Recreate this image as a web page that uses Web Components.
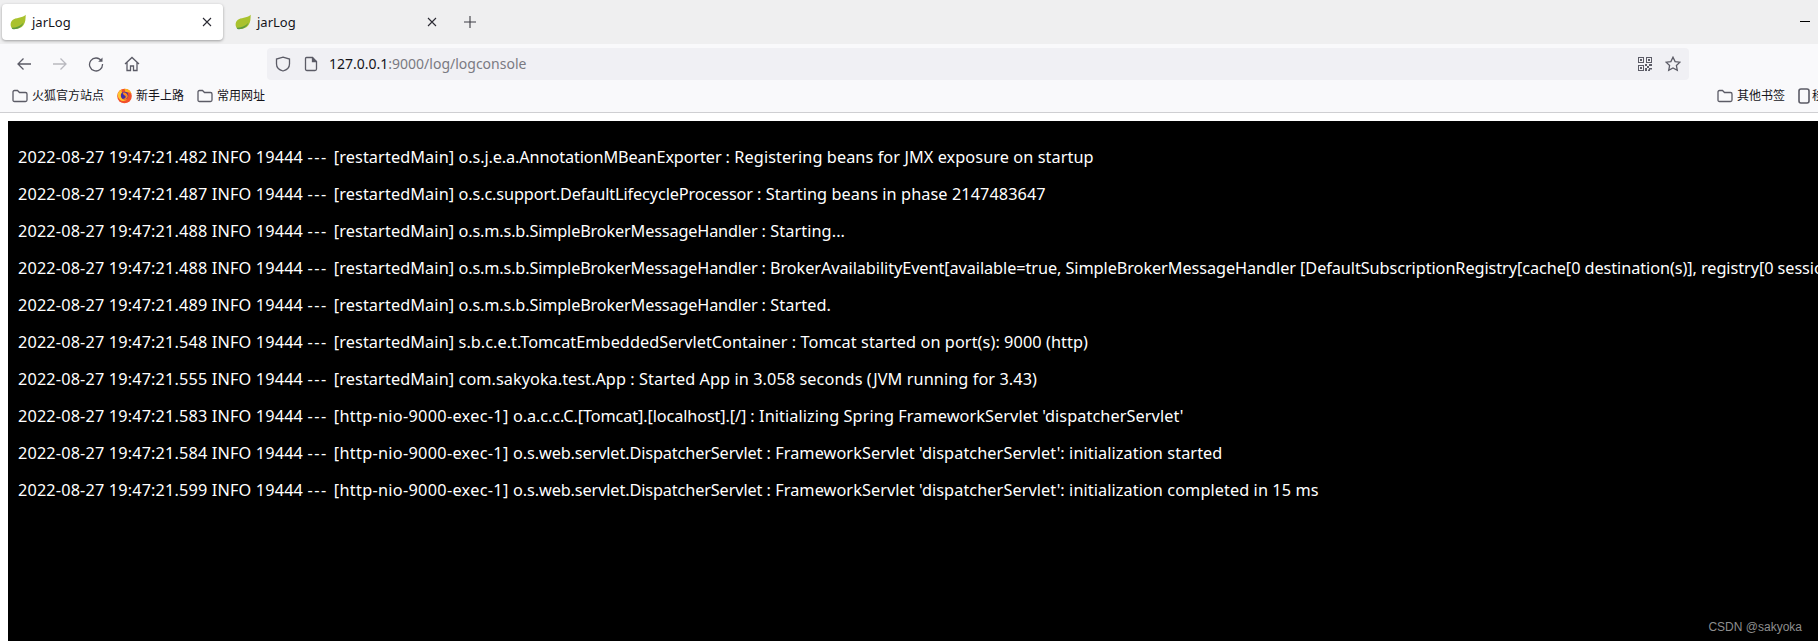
<!DOCTYPE html>
<html><head><meta charset="utf-8"><style>
html,body{margin:0;padding:0;width:1818px;height:644px;overflow:hidden;background:#fff}
</style></head><body>
<browser-window>
<tab-strip slot="tabs"></tab-strip>
<nav-bar slot="nav"></nav-bar>
<bookmark-bar slot="bookmarks"></bookmark-bar>
<log-console slot="page">
<log-line><span slot="date">2022-08-27 19:47:21.482 INFO 19444 </span><span slot="dash">--- </span><span slot="thread">[restartedMain] </span><span slot="logger">o.s.j.e.a.AnnotationMBeanExporter </span>: Registering beans for JMX exposure on startup</log-line>
<log-line><span slot="date">2022-08-27 19:47:21.487 INFO 19444 </span><span slot="dash">--- </span><span slot="thread">[restartedMain] </span><span slot="logger">o.s.c.support.DefaultLifecycleProcessor </span>: Starting beans in phase 2147483647</log-line>
<log-line><span slot="date">2022-08-27 19:47:21.488 INFO 19444 </span><span slot="dash">--- </span><span slot="thread">[restartedMain] </span><span slot="logger" class="broker">o.s.m.s.b.SimpleBrokerMessageHandler </span>: Starting...</log-line>
<log-line style="letter-spacing:-.07px"><span slot="date">2022-08-27 19:47:21.488 INFO 19444 </span><span slot="dash">--- </span><span slot="thread">[restartedMain] </span><span slot="logger" class="broker">o.s.m.s.b.SimpleBrokerMessageHandler </span>: BrokerAvailabilityEvent[available=true, SimpleBrokerMessageHandler [DefaultSubscriptionRegistry[cache[0 destination(s)], registry[0 sessions]]]]</log-line>
<log-line><span slot="date">2022-08-27 19:47:21.489 INFO 19444 </span><span slot="dash">--- </span><span slot="thread">[restartedMain] </span><span slot="logger" class="broker">o.s.m.s.b.SimpleBrokerMessageHandler </span>: Started.</log-line>
<log-line><span slot="date">2022-08-27 19:47:21.548 INFO 19444 </span><span slot="dash">--- </span><span slot="thread">[restartedMain] </span><span slot="logger" class="plain">s.b.c.e.t.TomcatEmbeddedServletContainer </span>: Tomcat started on port(s): 9000 (http)</log-line>
<log-line><span slot="date">2022-08-27 19:47:21.555 INFO 19444 </span><span slot="dash">--- </span><span slot="thread">[restartedMain] </span><span slot="logger" class="plain">com.sakyoka.test.App </span>: Started App in 3.058 seconds (JVM running for 3.43)</log-line>
<log-line><span slot="date">2022-08-27 19:47:21.583 INFO 19444 </span><span slot="dash">--- </span><span slot="thread" class="http">[http-nio-9000-exec-1] </span><span slot="logger">o.a.c.c.C.[Tomcat].[localhost].[/] </span>: Initializing Spring FrameworkServlet 'dispatcherServlet'</log-line>
<log-line><span slot="date">2022-08-27 19:47:21.584 INFO 19444 </span><span slot="dash">--- </span><span slot="thread" class="http">[http-nio-9000-exec-1] </span><span slot="logger">o.s.web.servlet.DispatcherServlet </span>: FrameworkServlet 'dispatcherServlet': initialization started</log-line>
<log-line><span slot="date">2022-08-27 19:47:21.599 INFO 19444 </span><span slot="dash">--- </span><span slot="thread" class="http">[http-nio-9000-exec-1] </span><span slot="logger">o.s.web.servlet.DispatcherServlet </span>: FrameworkServlet 'dispatcherServlet': initialization completed in 15 ms</log-line>
</log-console>
</browser-window>
<script>
const FONT='"Noto Sans","Noto Sans CJK SC",sans-serif';
const LEAF=`<svg width="16" height="16" viewBox="0 0 16 16" style="flex:none"><path d="M15.700 .8C15.500 4.500 15.800 8 13.400 11.200C11 14.400 6.200 15.500 2.400 14.600C.2 12.800 -.2 8.500 2.600 6C5.600 3.500 12 4.500 15.700 .8Z" fill="#a9c22e"/><path d="M1.500 13.800C5.500 14 10.500 12.500 13.400 8.800C11.800 13.600 6.500 16 2.400 15C2 14.600 1.700 14.200 1.500 13.800Z" fill="#5d9a40"/></svg>`;
const FOLDER=`<svg width="16" height="14" viewBox="0 0 16 14" fill="none" stroke="#5b5b66" stroke-width="1.300" style="flex:none"><path d="M1 3C1 2 1.500 1.500 2.500 1.500H5.500L7.500 3.500H13.500C14.500 3.500 15 4 15 5V11C15 12 14.500 12.500 13.500 12.500H2.500C1.500 12.500 1 12 1 11Z"/></svg>`;
const FOX=`<svg width="15" height="16" viewBox="0 0 16 16" style="flex:none"><circle cx="8" cy="8" r="7.800" fill="#f2502a"/><path d="M8 .2A7.800 7.800 0 0 1 15.500 6C13 4 11 3.500 9 4Z" fill="#ffb21f"/><circle cx="8" cy="7.500" r="4" fill="#3f2fa6"/><path d="M6 4.500C8.500 3.500 11.800 5.500 11.500 8.500C11 11 8.500 12 6.500 11C8.800 10.800 9.800 9.500 9 8C8.300 7 6.500 7 6 4.500Z" fill="#ff8a1f"/><path d="M1 5C2 3 3.500 1.500 5.500 1C4.500 2.500 4.800 3.500 5.500 4.200C3.800 5.500 3.500 7.500 4.500 9.500C5.500 11.500 8 12.500 10.500 11.500C9 13.500 5.500 14 3.200 12C1 10 .4 7.500 1 5Z" fill="#ffc62e"/></svg>`;
function def(name,css,html){customElements.define(name,class extends HTMLElement{constructor(){super();this.attachShadow({mode:'open'}).innerHTML=`<style>${css}</style>${html}`}})}
def('browser-window',`:host{display:flex;flex-direction:column;width:1818px;height:644px;overflow:hidden}`,`<slot name="tabs"></slot><slot name="nav"></slot><slot name="bookmarks"></slot><slot name="page"></slot>`);
def('tab-item',`:host{display:flex;align-items:center;width:221px;height:36px;box-sizing:border-box;padding:0 0 0 8px;font:13px/18px ${FONT};color:#15141a;border-radius:4px;flex:none}
:host([active]){background:#fff;box-shadow:0 1px 3px rgba(0,0,0,.35)}
.t{margin-left:6px;flex:1}
svg.x{margin-right:11px;flex:none}`,`${LEAF}<span class="t">jarLog</span><svg class="x" width="10" height="10" viewBox="0 0 10 10" stroke="#2b2a33" stroke-width="1.100"><path d="M1 1L9 9M9 1L1 9"/></svg>`);
def('tab-strip',`:host{display:flex;align-items:center;height:44px;box-sizing:border-box;background:#efeff0;padding:0 0 0 2px;gap:4px;flex:none}
.plus{margin-left:11px;flex:none}.spacer{flex:1}.min{margin-right:8px;width:10px;height:1px;background:#000;margin-bottom:2px}`,
`<tab-item active></tab-item><tab-item></tab-item><svg class="plus" width="14" height="14" viewBox="0 0 14 14" stroke="#3d3c44" stroke-width="1.100"><path d="M7 1V13M1 7H13"/></svg><span class="spacer"></span><span class="min"></span>`);
def('nav-bar',`:host{display:flex;align-items:flex-end;height:36px;background:#f9f9fb;flex:none;padding-left:16px;box-sizing:border-box}
.btn{display:flex;flex:none;margin-right:20px;align-self:center;padding-top:4px}
.ic{display:flex;flex:none}
.bar{margin-left:127px;display:flex;align-items:center;width:1422px;height:32px;background:#f0f0f4;border-radius:4px;box-sizing:border-box;flex:none}
.u{font:14px/20px ${FONT};color:#7a7a82}.u b{font-weight:400;color:#15141a}
.sp{flex:1}`,
`<span class="btn"><svg width="16" height="16" viewBox="0 0 16 16" fill="none" stroke="#5b5b66" stroke-width="1.300"><path d="M15 8H2M7.500 2.500L2 8L7.500 13.500"/></svg></span>
<span class="btn"><svg width="16" height="16" viewBox="0 0 16 16" fill="none" stroke="#b9b9bf" stroke-width="1.300"><path d="M1 8H14M8.500 2.500L14 8L8.500 13.500"/></svg></span>
<span class="btn"><svg width="16" height="16" viewBox="0 0 16 16" fill="none" stroke="#5b5b66" stroke-width="1.300"><path d="M13.500 5A6.500 6.500 0 1 0 14.500 8"/><path d="M14.500 1.500V5.800H10.200Z" fill="#5b5b66" stroke="none"/></svg></span>
<span class="btn" style="margin-right:0"><svg width="16" height="16" viewBox="0 0 16 16" fill="none" stroke="#5b5b66" stroke-width="1.300"><path d="M1 8L8 1.500L15 8M3 6.500V14.500H6.500V10H9.500V14.500H13V6.500"/></svg></span>
<div class="bar">
<svg class="ic" style="margin-left:8px" width="16" height="16" viewBox="0 0 16 16" fill="none" stroke="#5b5b66" stroke-width="1.300"><path d="M8 1.200L14.500 3V8C14.500 11.500 11.500 14 8 15C4.500 14 1.500 11.500 1.500 8V3Z"/></svg>
<svg class="ic" style="margin-left:13px" width="14" height="16" viewBox="0 0 14 16" fill="none" stroke="#5b5b66" stroke-width="1.300"><path d="M2.500 1.500H8.500L12.500 5.500V13C12.500 14 12 14.500 11 14.500H3C2 14.500 1.500 14 1.500 13V2.500C1.500 2 2 1.500 2.500 1.500Z"/><path d="M8.500 1.500V5.500H12.500" fill="#5b5b66"/></svg>
<span class="u" style="margin-left:11px"><b>127.0.0.1</b>:9000/log/logconsole</span><span class="sp"></span>
<svg class="ic" style="margin-right:13px" width="14" height="14" viewBox="0 0 14 14" fill="#5b5b66"><path fill-rule="evenodd" d="M0 0H6V6H0ZM1 1V5H5V1ZM8 0H14V6H8ZM9 1V5H13V1ZM0 8H6V14H0ZM1 9V13H5V9Z"/><path d="M2 2H4V4H2ZM10 2H12V4H10ZM2 10H4V12H2ZM7 7H9V9H7ZM9 9H11V11H9ZM11 7H14V9H11ZM7 11H9V14H7ZM11 11H14V12.500H11ZM10 12.500H12V14H10Z"/></svg>
<svg class="ic" style="margin-right:8px" width="16" height="16" viewBox="0 0 16 16" fill="none" stroke="#5b5b66" stroke-width="1.300"><path d="M8 1.200L10.100 5.600L14.900 6.200L11.400 9.500L12.300 14.300L8 12L3.700 14.300L4.600 9.500L1.100 6.200L5.900 5.600Z"/></svg>
</div>`);
def('bookmark-item',`:host{display:flex;align-items:center;gap:4px;font:12px/16px ${FONT};color:#15141a;flex:none}`,`<slot name="icon"></slot><slot></slot>`);
def('bookmark-bar',`:host{display:flex;align-items:center;height:33px;box-sizing:border-box;background:#f9f9fb;border-bottom:1px solid #cfcfd2;flex:none;padding:0 0 1px 12px;gap:13px}
.sp{flex:1}`,
`<bookmark-item><span slot="icon" style="display:flex">${FOLDER}</span>火狐官方站点</bookmark-item>
<bookmark-item><span slot="icon" style="display:flex">${FOX}</span>新手上路</bookmark-item>
<bookmark-item><span slot="icon" style="display:flex">${FOLDER}</span>常用网址</bookmark-item>
<span class="sp"></span>
<bookmark-item><span slot="icon" style="display:flex">${FOLDER}</span>其他书签</bookmark-item>
<bookmark-item style="width:20px;overflow:hidden;gap:2px"><span slot="icon" style="display:flex"><svg width="12" height="16" viewBox="0 0 12 16" fill="none" stroke="#5b5b66" stroke-width="1.600"><rect x="1" y="1" width="10" height="14" rx="2"/></svg></span>移</bookmark-item>`);
def('log-line',`:host{display:block;margin:0 0 16px;white-space:pre;letter-spacing:.08px}
::slotted([slot=date]){letter-spacing:.15px}
::slotted([slot=dash]){letter-spacing:1.6px}
::slotted([slot=thread]){letter-spacing:.1px}
::slotted(.http){letter-spacing:.3px}
::slotted([slot=logger]){letter-spacing:-.12px}
::slotted(.broker){letter-spacing:-.16px}
::slotted(.plain){letter-spacing:.04px}`,`<slot name="date"></slot><slot name="dash"></slot><slot name="thread"></slot><slot name="logger"></slot><slot></slot>`);
def('log-console',`:host{display:block;flex:1;min-height:0;margin:8px 0 3px 8px;background:#000;color:#fff;position:relative;overflow:hidden;padding-top:26px;font:16.27px/21px ${FONT};white-space:nowrap}
.wrap{padding-left:10px}
.mark{position:absolute;right:16px;bottom:6px;font:12px/16px "Liberation Sans",sans-serif;color:#8e8e8e}`,
`<div class="wrap"><slot></slot></div><span class="mark">CSDN @sakyoka</span>`);
</script>
</body></html>
